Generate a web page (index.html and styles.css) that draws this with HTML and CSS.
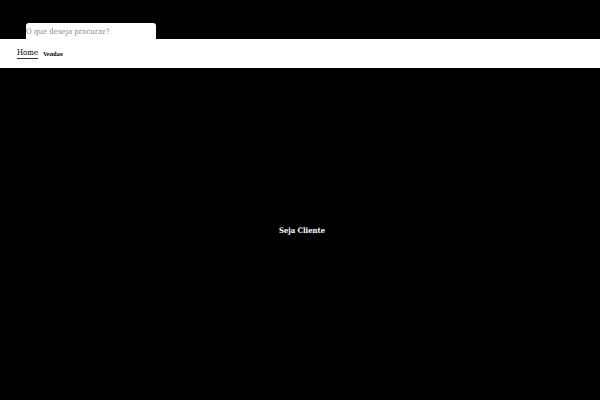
FILE: index.html
```html
<!DOCTYPE html>
<html lang="pt">
<head>
<meta charset="utf-8">
<link rel="stylesheet" href="styles.css">
</head>
<body>
<header class="top">
  <div class="search">
    <input class="search-input" type="text" placeholder="O que deseja procurar?">
  </div>
</header>
<nav class="nav">
  <a class="nav-link active" href="#">Home</a>
  <a class="nav-link bold" href="#">Vendas</a>
</nav>
<main class="hero">
  <span class="cta">Seja Cliente</span>
</main>
</body>
</html>
```
FILE: styles.css
```css
html, body {
  margin: 0;
  padding: 0;
  background: #000;
  height: 100%;
}
body {
  font-family: "DejaVu Serif", serif;
  font-stretch: condensed;
  display: flex;
  flex-direction: column;
}
.top {
  height: 39px;
  padding-left: 26px;
  display: flex;
  align-items: flex-end;
}
.search {
  width: 130px;
  height: 16px;
  background: #fff;
  border-radius: 3px 3px 0 0;
  display: flex;
  align-items: center;
}
.search-input {
  border: none;
  outline: none;
  background: transparent;
  padding: 0;
  margin: 0;
  width: 100%;
  font-family: "DejaVu Serif", serif;
  font-stretch: condensed;
  font-size: 7.8px;
  color: #333;
}
.search-input::placeholder {
  color: #8a8a8a;
}
.nav {
  height: 29px;
  background: #fff;
  display: flex;
  align-items: center;
  padding-left: 17px;
  gap: 5px;
}
.nav-link {
  color: #000;
  text-decoration: none;
  font-size: 7.8px;
}
.nav-link.active {
  border-bottom: 1px solid #333;
  padding-bottom: 1px;
}
.nav-link.bold {
  font-weight: bold;
  font-size: 5.5px;
}
.hero {
  flex: 1;
  display: flex;
  align-items: center;
  justify-content: center;
  padding-left: 4px;
  padding-bottom: 8px;
}
.cta {
  color: #fff;
  font-weight: bold;
  font-size: 7.6px;
}
```
